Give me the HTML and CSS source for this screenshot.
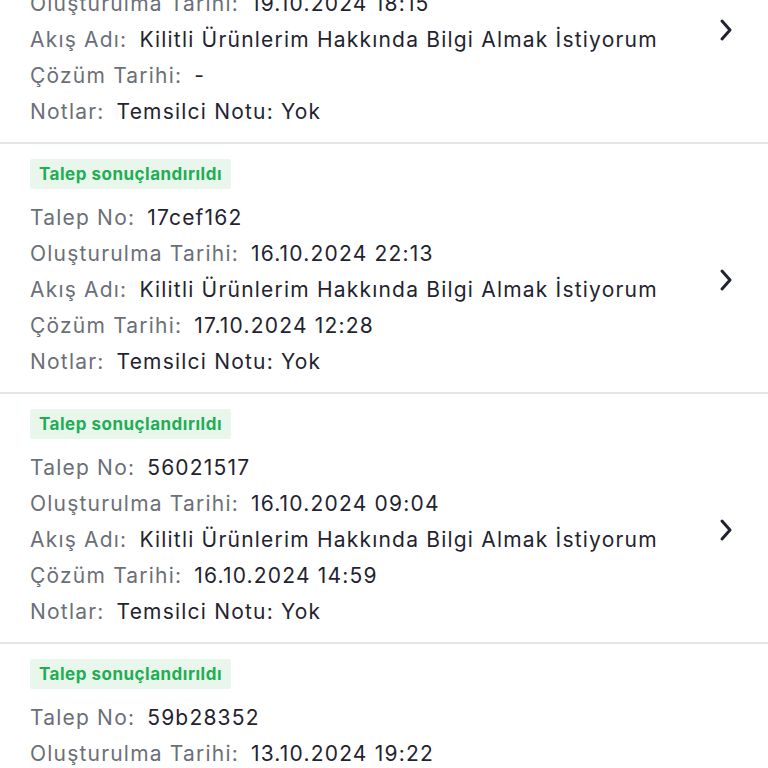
FILE: index.html
```html
<!DOCTYPE html>
<html lang="tr">
<head>
  <meta charset="UTF-8">
  <meta name="viewport" content="width=device-width, initial-scale=1.0">
  <title>Taleplerim</title>
  <link rel="stylesheet" href="styles.css">
</head>
<body>
  <div class="ticket-list">
    <div class="ticket">
      <div class="ticket-body">
        <span class="badge">Talep sonuçlandırıldı</span>
        <div class="row"><span class="label">Talep No:</span><span class="value">a81c4d20</span></div>
        <div class="row"><span class="label">Oluşturulma Tarihi:</span><span class="value">19.10.2024 18:15</span></div>
        <div class="row"><span class="label">Akış Adı:</span><span class="value">Kilitli Ürünlerim Hakkında Bilgi Almak İstiyorum</span></div>
        <div class="row"><span class="label">Çözüm Tarihi:</span><span class="value">-</span></div>
        <div class="row"><span class="label">Notlar:</span><span class="value">Temsilci Notu: Yok</span></div>
      </div>
      <svg class="chevron" viewBox="0 0 14 24" width="14" height="24"><path d="M3 3l8 9-8 9" fill="none" stroke="#1f2430" stroke-width="3" stroke-linecap="round" stroke-linejoin="round"/></svg>
    </div>
    <div class="ticket">
      <div class="ticket-body">
        <span class="badge">Talep sonuçlandırıldı</span>
        <div class="row"><span class="label">Talep No:</span><span class="value">17cef162</span></div>
        <div class="row"><span class="label">Oluşturulma Tarihi:</span><span class="value">16.10.2024 22:13</span></div>
        <div class="row"><span class="label">Akış Adı:</span><span class="value">Kilitli Ürünlerim Hakkında Bilgi Almak İstiyorum</span></div>
        <div class="row"><span class="label">Çözüm Tarihi:</span><span class="value">17.10.2024 12:28</span></div>
        <div class="row"><span class="label">Notlar:</span><span class="value">Temsilci Notu: Yok</span></div>
      </div>
      <svg class="chevron" viewBox="0 0 14 24" width="14" height="24"><path d="M3 3l8 9-8 9" fill="none" stroke="#1f2430" stroke-width="3" stroke-linecap="round" stroke-linejoin="round"/></svg>
    </div>
    <div class="ticket">
      <div class="ticket-body">
        <span class="badge">Talep sonuçlandırıldı</span>
        <div class="row"><span class="label">Talep No:</span><span class="value">56021517</span></div>
        <div class="row"><span class="label">Oluşturulma Tarihi:</span><span class="value">16.10.2024 09:04</span></div>
        <div class="row"><span class="label">Akış Adı:</span><span class="value">Kilitli Ürünlerim Hakkında Bilgi Almak İstiyorum</span></div>
        <div class="row"><span class="label">Çözüm Tarihi:</span><span class="value">16.10.2024 14:59</span></div>
        <div class="row"><span class="label">Notlar:</span><span class="value">Temsilci Notu: Yok</span></div>
      </div>
      <svg class="chevron" viewBox="0 0 14 24" width="14" height="24"><path d="M3 3l8 9-8 9" fill="none" stroke="#1f2430" stroke-width="3" stroke-linecap="round" stroke-linejoin="round"/></svg>
    </div>
    <div class="ticket">
      <div class="ticket-body">
        <span class="badge">Talep sonuçlandırıldı</span>
        <div class="row"><span class="label">Talep No:</span><span class="value">59b28352</span></div>
        <div class="row"><span class="label">Oluşturulma Tarihi:</span><span class="value">13.10.2024 19:22</span></div>
        <div class="row"><span class="label">Akış Adı:</span><span class="value">Kilitli Ürünlerim Hakkında Bilgi Almak İstiyorum</span></div>
        <div class="row"><span class="label">Çözüm Tarihi:</span><span class="value">14.10.2024 10:41</span></div>
        <div class="row"><span class="label">Notlar:</span><span class="value">Temsilci Notu: Yok</span></div>
      </div>
      <svg class="chevron" viewBox="0 0 14 24" width="14" height="24"><path d="M3 3l8 9-8 9" fill="none" stroke="#1f2430" stroke-width="3" stroke-linecap="round" stroke-linejoin="round"/></svg>
    </div>
  </div>
</body>
</html>
```

FILE: styles.css
```css
body { margin: 0; background: #fff; font-family: Inter, "Noto Sans", sans-serif; overflow: hidden; }
/* list is scrolled: first card is cut off at the top */
.ticket-list { margin-top: -106px; }
.ticket { display: flex; align-items: center; padding: 15px 35px 12px 30px; border-bottom: 2px solid #e4e6ea; }
.ticket-body { flex: 1; display: flex; flex-direction: column; align-items: flex-start; }
.badge { display: inline-block; height: 30px; line-height: 30px; padding: 0 9px; margin-bottom: 11px; background: #e8f6ec; color: #1fae55; font-size: 17px; font-weight: 700; letter-spacing: 0.5px; border-radius: 2px; }
.row { display: flex; gap: 12px; height: 36px; line-height: 36px; font-size: 21px; letter-spacing: 1.2px; white-space: nowrap; }
.label { color: #6b6f78; }
.value { color: #1f2430; }
.chevron { margin-top: 20px; flex-shrink: 0; }
```
